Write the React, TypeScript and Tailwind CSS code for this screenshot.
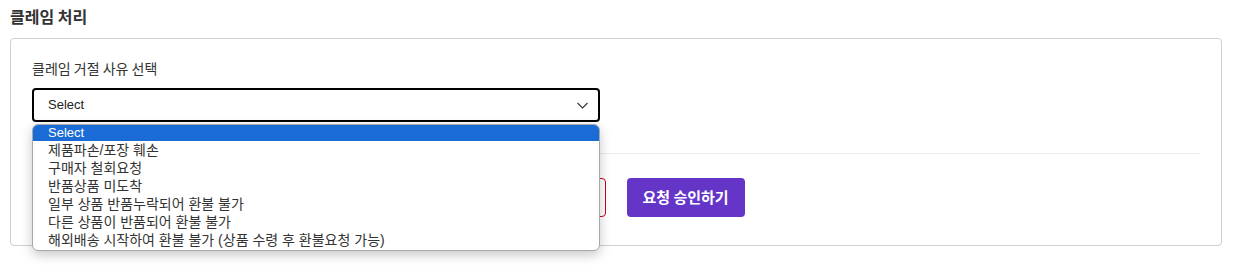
import React from 'react';

const reasons = [
    'Select',
    '제품파손/포장 훼손',
    '구매자 철회요청',
    '반품상품 미도착',
    '일부 상품 반품누락되어 환불 불가',
    '다른 상품이 반품되어 환불 불가',
    '해외배송 시작하여 환불 불가 (상품 수령 후 환불요청 가능)',
];

const App: React.FC = () => {
    return (
        <div className="w-[1242px] h-[265px] bg-white pl-[10px] pr-[20px] pt-[4px] font-['Noto_Sans_CJK_KR','Noto_Sans',sans-serif] text-[#333]">
            {/* Title */}
            <h2 className="text-[16px] font-bold leading-[24px] mb-[10px] text-[#333]">클레임 처리</h2>

            {/* Card */}
            <div className="border border-[#cfcfcf] rounded-[4px] px-[21px] pt-[19px] pb-[28px]">
                <div className="text-[14px] leading-[20px] text-[#333]">클레임 거절 사유 선택</div>

                {/* Select with open list */}
                <div className="relative w-[568px] mt-[10px]">
                    <div className="h-[34px] border-2 border-black rounded-[4px] flex items-center justify-between pl-[14px] pr-[10px]">
                        <span className="text-[13px] font-['Liberation_Sans',sans-serif] text-[#222]">Select</span>
                        <svg width="11" height="7" viewBox="0 0 11 7" fill="none">
                            <path d="M0.5 1 L5.5 6 L10.5 1" stroke="#333" strokeWidth="1.1" />
                        </svg>
                    </div>

                    <div className="absolute left-0 top-full mt-[2px] w-full z-10 bg-white border border-[#a8a8a8] rounded-[6px] overflow-hidden shadow-[0_4px_12px_rgba(0,0,0,0.22)] pb-[1px]">
                        {reasons.map((r, i) => (
                            <div
                                key={i}
                                className={
                                    i === 0
                                        ? 'h-[16px] leading-[16px] px-[15px] bg-[#1a6bd6] text-white text-[13px] font-["Liberation_Sans",sans-serif]'
                                        : 'h-[18px] leading-[18px] px-[15px] text-[#333] text-[14px] font-["Liberation_Sans","Noto_Sans_CJK_KR",sans-serif]'
                                }
                            >
                                {r}
                            </div>
                        ))}
                    </div>
                </div>

                {/* Divider */}
                <div className="border-t border-[#ececec] mt-[31px]" />

                {/* Buttons */}
                <div className="flex justify-center gap-[21px] mt-[24px]">
                    <button className="w-[118px] h-[39px] rounded-[4px] border border-[#d0021b] bg-white text-[#d0021b] text-[15px] font-bold">
                        요청 거절하기
                    </button>
                    <button className="w-[118px] h-[39px] rounded-[4px] bg-[#6535c8] text-white text-[15px] font-bold">
                        요청 승인하기
                    </button>
                </div>
            </div>
        </div>
    );
};

export default App;
